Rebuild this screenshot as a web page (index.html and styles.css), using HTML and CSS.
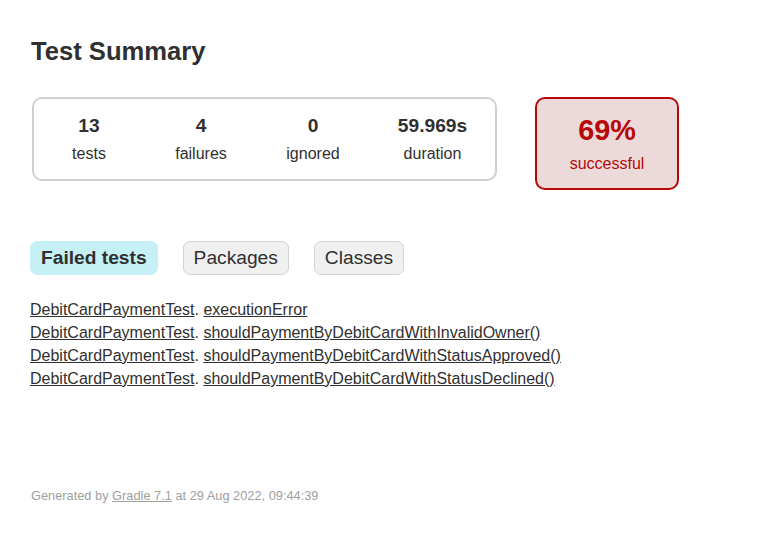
FILE: index.html
```html
<!DOCTYPE html>
<html lang="en">
<head>
<meta charset="utf-8">
<title>Test results - Test Summary</title>
<link rel="stylesheet" href="styles.css">
</head>
<body>
<div class="content">
  <h1 class="title">Test Summary</h1>
  <div class="summary">
    <div class="summary-group">
      <div class="info-box">
        <div class="counter">13</div>
        <p class="label">tests</p>
      </div>
      <div class="info-box">
        <div class="counter">4</div>
        <p class="label">failures</p>
      </div>
      <div class="info-box">
        <div class="counter">0</div>
        <p class="label">ignored</p>
      </div>
      <div class="info-box info-box--duration">
        <div class="counter">59.969s</div>
        <p class="label">duration</p>
      </div>
    </div>
    <div class="info-box success-rate">
      <div class="percent">69%</div>
      <p class="label">successful</p>
    </div>
  </div>

  <ul class="tab-links">
    <li class="tab tab--selected"><a class="tab-link" href="#tab0">Failed tests</a></li>
    <li class="tab"><a class="tab-link" href="#tab1">Packages</a></li>
    <li class="tab"><a class="tab-link" href="#tab2">Classes</a></li>
  </ul>

  <ul class="link-list">
    <li class="link-item"><a class="link" href="#">DebitCardPaymentTest</a>. <a class="link" href="#">executionError</a></li>
    <li class="link-item"><a class="link" href="#">DebitCardPaymentTest</a>. <a class="link" href="#">shouldPaymentByDebitCardWithInvalidOwner()</a></li>
    <li class="link-item"><a class="link" href="#">DebitCardPaymentTest</a>. <a class="link" href="#">shouldPaymentByDebitCardWithStatusApproved()</a></li>
    <li class="link-item"><a class="link" href="#">DebitCardPaymentTest</a>. <a class="link" href="#">shouldPaymentByDebitCardWithStatusDeclined()</a></li>
  </ul>

  <p class="footer">Generated by <a class="footer-link" href="#">Gradle 7.1</a> at 29 Aug 2022, 09:44:39</p>
</div>
</body>
</html>
```

FILE: styles.css
```css
html, body {
  margin: 0;
  padding: 0;
  background: #ffffff;
}

body {
  font-family: "Liberation Sans", Arial, sans-serif;
  font-size: 16px;
  color: #303030;
}

.content {
  padding: 36px 30px 30px 30px;
}

.title {
  margin: 0;
  font-size: 25.6px;
  font-weight: bold;
  line-height: 30px;
  white-space: nowrap;
  padding-left: 1px;
}

.summary {
  margin-top: 31px;
  display: flex;
  align-items: flex-start;
  gap: 38px;
  padding-left: 2px;
}

.summary-group {
  display: flex;
  gap: 2px;
  border: solid 2px #d0d0d0;
  border-radius: 10px;
  padding: 0;
}

.info-box {
  width: 110px;
  padding: 16px 0;
  text-align: center;
}

.info-box--duration {
  width: 125px;
}

.counter {
  font-size: 19.2px;
  font-weight: bold;
  margin-bottom: 8px;
}

.label {
  margin: 0;
}

.success-rate {
  width: 140px;
  padding: 15px 0;
  border: solid 2px #b60808;
  border-radius: 10px;
  background-color: #ecdada;
  color: #b60808;
}

.percent {
  font-size: 28.8px;
  font-weight: bold;
  margin-bottom: 8px;
}

.tab-links {
  list-style: none;
  margin: 51px 0 0 0;
  padding: 0;
  display: flex;
  gap: 25px;
}

.tab {
  padding: 5px 10px;
  border: solid 1px #d4d4d4;
  border-radius: 7px;
  background-color: #f0f0f0;
}

.tab--selected {
  background-color: #c5f0f5;
  border-color: #c5f0f5;
}

.tab-link {
  display: block;
  font-size: 19.2px;
  color: #303030;
  text-decoration: none;
}

.tab--selected .tab-link {
  font-weight: bold;
}

.link-list {
  list-style: none;
  margin: 26px 0 0 0;
  padding: 0;
}

.link-item {
  margin-bottom: 5px;
  white-space: nowrap;
}

.link {
  color: #303030;
  text-decoration: underline;
}

.footer {
  margin: 100px 0 0 0;
  font-size: 12.8px;
  color: #a0a0a0;
  white-space: nowrap;
  padding-left: 1px;
}

.footer-link {
  color: #a0a0a0;
  text-decoration: underline;
}
```
